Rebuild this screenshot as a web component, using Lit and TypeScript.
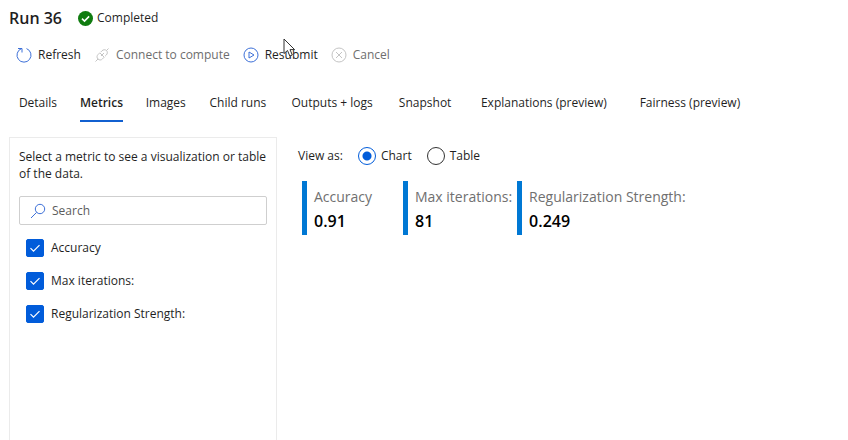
import { LitElement, html, css, svg } from "lit";
import { customElement, state } from "lit/decorators.js";
import { classMap } from "lit/directives/class-map.js";

const icons = {
  refresh: svg`<svg class="icon" viewBox="0 0 16 16" fill="none" stroke="currentColor"><path d="M10.500 1.600a7 7 0 1 1-5 0"/><path d="M2 1.500h4v4" /></svg>`,
  connect: svg`<svg class="icon" viewBox="0 0 16 16" fill="none" stroke="currentColor"><path d="M1.500 14.500l2.500-2.500M12.500 3.500l2-2M4 12c-1.400-1.400-1.200-3.200 0-4.400l1.800-1.800 4.400 4.400-1.800 1.800c-1.200 1.200-3 1.400-4.400 0zM6.800 5l1.200-1.200c1.200-1.200 3-1.500 4.500-.3 1.300 1.500 1 3.300-.2 4.500l-1.200 1.200M7 9l3-3"/></svg>`,
  resubmit: svg`<svg class="icon" viewBox="0 0 16 16" fill="none" stroke="currentColor"><circle cx="8" cy="8" r="7"/><path d="M6 5l5 3-5 3z"/></svg>`,
  cancel: svg`<svg class="icon" viewBox="0 0 16 16" fill="none" stroke="currentColor"><circle cx="8" cy="8" r="7"/><path d="M5 5l6 6M11 5l-6 6"/></svg>`,
};

const actions = [
  { label: "Refresh", icon: icons.refresh, disabled: false },
  { label: "Connect to compute", icon: icons.connect, disabled: true },
  { label: "Resubmit", icon: icons.resubmit, disabled: false },
  { label: "Cancel", icon: icons.cancel, disabled: true },
];

const tabs = [
  "Details",
  "Metrics",
  "Images",
  "Child runs",
  "Outputs + logs",
  "Snapshot",
  "Explanations (preview)",
  "Fairness (preview)",
];

const metrics = [
  { name: "Accuracy", value: "0.91" },
  { name: "Max iterations:", value: "81" },
  { name: "Regularization Strength:", value: "0.249" },
];

@customElement("app-root")
export class AppRoot extends LitElement {
  @state() private tab = "Metrics";
  @state() private view = "Chart";

  static styles = css`
    :host {
      display: flex;
      flex-direction: column;
      position: relative;
      box-sizing: border-box;
      min-height: 100vh;
      padding: 6px 9px 0;
      overflow: hidden;
      background: #fff;
      color: #1f1f1f;
      font: 12px/18px "Open Sans", "Noto Sans", sans-serif;
    }
    button,
    input {
      font: inherit;
      color: inherit;
      margin: 0;
    }
    button {
      border: 0;
      padding: 0;
      background: none;
      white-space: nowrap;
    }
    .header {
      display: flex;
      align-items: center;
      gap: 16px;
      height: 24px;
    }
    .title {
      margin: 0;
      font-size: 16px;
      font-weight: 600;
    }
    .status {
      display: flex;
      align-items: center;
      gap: 4px;
    }
    .status-icon {
      width: 15px;
      height: 15px;
    }
    .toolbar {
      display: flex;
      align-items: center;
      gap: 13px;
      height: 24px;
      margin-top: 13px;
      padding-left: 7px;
    }
    .action {
      display: flex;
      align-items: center;
      gap: 6px;
    }
    .action:disabled {
      color: #6e6e6e;
    }
    .icon {
      width: 16px;
      height: 16px;
      color: #3d70d8;
    }
    .action:disabled .icon {
      color: #c4c4c4;
    }
    .tabs {
      display: flex;
      gap: 22px;
      margin-top: 18px;
      padding-left: 9px;
    }
    .tab {
      height: 37px;
      border-bottom: 2px solid transparent;
      line-height: 35px;
    }
    .tab::after {
      content: attr(title);
      display: block;
      height: 0;
      overflow: hidden;
      visibility: hidden;
      font-weight: 600;
    }
    .tab:nth-child(n + 5) {
      padding: 0 1px;
    }
    .tab.preview {
      padding: 0 3px;
    }
    .tab.selected {
      border-color: #1160d0;
      font-weight: 600;
    }
    .body {
      display: flex;
      flex: 1;
      gap: 21px;
      margin-top: 15px;
    }
    .panel {
      box-sizing: border-box;
      flex: 0 0 268px;
      padding: 10px 9px;
      border: 1px solid #ebebeb;
      border-bottom: 0;
    }
    .hint {
      margin: 0;
      line-height: 17px;
    }
    .search {
      display: flex;
      align-items: center;
      gap: 6px;
      box-sizing: border-box;
      height: 29px;
      margin-top: 14px;
      padding-left: 10px;
      border: 1px solid #cfcfcf;
      border-radius: 2px;
    }
    .search-input {
      flex: 1;
      min-width: 0;
      border: 0;
      outline: 0;
      padding: 0;
      background: none;
    }
    .search-input::placeholder {
      color: #5c5c5c;
      opacity: 1;
    }
    .checks {
      display: flex;
      flex-direction: column;
      gap: 15px;
      margin-top: 14px;
      padding-left: 7px;
    }
    .check {
      display: flex;
      align-items: center;
      gap: 7px;
    }
    .box {
      display: grid;
      width: 18px;
      height: 18px;
    }
    .box > * {
      grid-area: 1 / 1;
    }
    .box-input {
      appearance: none;
      border: 1px solid #333;
      border-radius: 2px;
    }
    .box-input:checked {
      border-color: #015cda;
      background: #015cda;
    }
    .tick {
      width: 18px;
      height: 18px;
      pointer-events: none;
    }
    .content {
      flex: 1;
      min-width: 0;
      padding-top: 10px;
    }
    .views {
      display: flex;
      align-items: center;
      gap: 15px;
      height: 18px;
    }
    .view {
      display: flex;
      align-items: center;
      gap: 5px;
    }
    .radio {
      appearance: none;
      box-sizing: border-box;
      width: 18px;
      height: 18px;
      border: 1px solid #333;
      border-radius: 50%;
    }
    .radio:checked {
      border-color: #015cda;
      background: radial-gradient(circle, #015cda 4px, #fff 5px);
    }
    .cards {
      display: flex;
      gap: 5px;
      margin: 16px 0 0;
      padding-left: 4px;
    }
    .card {
      box-sizing: border-box;
      min-width: 96px;
      padding: 4px 0 2px 7px;
      border-left: 5px solid #0078d4;
      white-space: nowrap;
    }
    .name {
      color: #707070;
      font-size: 14px;
      line-height: 24px;
    }
    .value {
      margin: 0;
      color: #000;
      font-size: 16px;
      font-weight: 600;
      line-height: 24px;
    }
    .pointer {
      position: absolute;
      left: 283px;
      top: 38px;
      width: 13px;
      height: 20px;
      pointer-events: none;
    }
  `;

  render() {
    return html`
      <header class="header">
        <h1 class="title">Run 36</h1>
        <span class="status">
          <svg class="status-icon" viewBox="0 0 15 15">
            <circle cx="7.5" cy="7.5" r="7.5" fill="#107c10" />
            <path d="M4 7.600l2.500 2.500 4.600-4.700" fill="none" stroke="#fff" stroke-width="1.600" />
          </svg>
          Completed
        </span>
      </header>
      <div class="toolbar" role="toolbar">
        ${actions.map(
          (a) => html`<button class="action" ?disabled=${a.disabled}>${a.icon}<span>${a.label}</span></button>`,
        )}
      </div>
      <nav class="tabs" role="tablist">
        ${tabs.map(
          (t) => html`<button
            class=${classMap({ tab: true, preview: t.endsWith("(preview)"), selected: t === this.tab })}
            role="tab"
            title=${t}
            aria-selected=${t === this.tab}
            @click=${() => (this.tab = t)}
          >${t}</button>`,
        )}
      </nav>
      <main class="body">
        <aside class="panel">
          <p class="hint">Select a metric to see a visualization or table of the data.</p>
          <label class="search">
            <svg class="icon" viewBox="0 0 16 16" fill="none" stroke="currentColor">
              <circle cx="10" cy="6" r="4.7" />
              <path d="M6.600 9.400L1 15" />
            </svg>
            <input class="search-input" type="search" placeholder="Search" aria-label="Search" />
          </label>
          <div class="checks">
            ${metrics.map(
              (m) => html`<label class="check">
                <span class="box">
                  <input class="box-input" type="checkbox" checked />
                  <svg class="tick" viewBox="0 0 18 18">
                    <path d="M4.500 9.200l3 3 6-6" fill="none" stroke="#fff" stroke-width="1.200" />
                  </svg>
                </span>
                ${m.name}
              </label>`,
            )}
          </div>
        </aside>
        <section class="content">
          <div class="views" role="radiogroup" aria-labelledby="view-as">
            <span id="view-as">View as:</span>
            ${["Chart", "Table"].map(
              (v) => html`<label class="view">
                <input
                  class="radio"
                  type="radio"
                  name="view"
                  .checked=${v === this.view}
                  @change=${() => (this.view = v)}
                />${v}
              </label>`,
            )}
          </div>
          <dl class="cards">
            ${metrics.map(
              (m) => html`<div class="card">
                <dt class="name">${m.name}</dt>
                <dd class="value">${m.value}</dd>
              </div>`,
            )}
          </dl>
        </section>
      </main>
      <svg class="pointer" viewBox="0 0 13 20" aria-hidden="true">
        <path d="M1 1v14.500l3.500-3 2.300 5.500 2.500-1-2.300-5.400h4.600z" fill="#fff" stroke="#333" />
      </svg>
    `;
  }
}
